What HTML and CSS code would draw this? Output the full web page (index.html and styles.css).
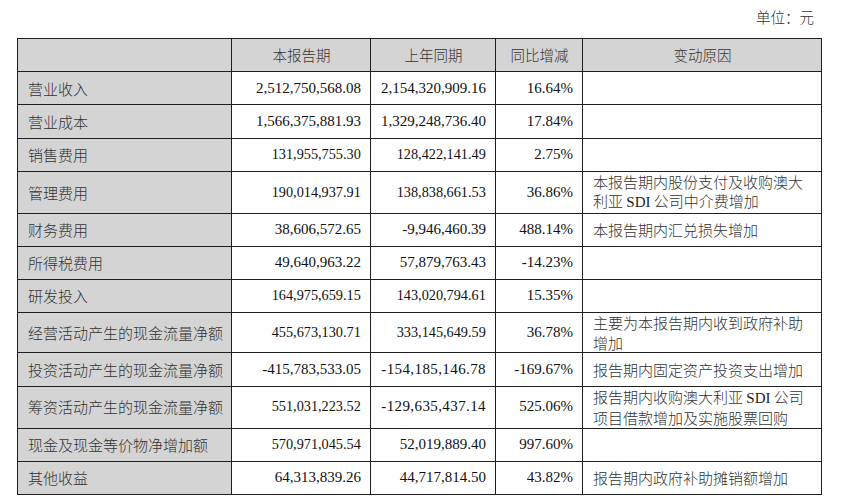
FILE: index.html
```html
<!DOCTYPE html>
<html lang="zh-CN">
<head>
<meta charset="utf-8">
<title>主要财务数据同比变动情况</title>
<link rel="stylesheet" href="styles.css">
</head>
<body>
<div class="page">
  <div class="unit">单位：元</div>
  <table class="fin">
    <colgroup>
      <col class="c1"><col class="c2"><col class="c3"><col class="c4"><col class="c5">
    </colgroup>
    <thead>
      <tr>
        <th class="lab"></th>
        <th>本报告期</th>
        <th>上年同期</th>
        <th>同比增减</th>
        <th>变动原因</th>
      </tr>
    </thead>
    <tbody>
      <tr><td class="lab">营业收入</td><td class="num">2,512,750,568.08</td><td class="num">2,154,320,909.16</td><td class="num">16.64%</td><td class="why"></td></tr>
      <tr><td class="lab">营业成本</td><td class="num">1,566,375,881.93</td><td class="num">1,329,248,736.40</td><td class="num">17.84%</td><td class="why"></td></tr>
      <tr><td class="lab">销售费用</td><td class="num"><span class="v sq">131,955,755.30</span></td><td class="num"><span class="v sq">128,422,141.49</span></td><td class="num">2.75%</td><td class="why"></td></tr>
      <tr class="two"><td class="lab">管理费用</td><td class="num"><span class="v sq">190,014,937.91</span></td><td class="num"><span class="v sq">138,838,661.53</span></td><td class="num">36.86%</td><td class="why">本报告期内股份支付及收购澳大利亚 <span class="lat">SDI</span> 公司中介费增加</td></tr>
      <tr><td class="lab">财务费用</td><td class="num">38,606,572.65</td><td class="num">-9,946,460.39</td><td class="num">488.14%</td><td class="why">本报告期内汇兑损失增加</td></tr>
      <tr><td class="lab">所得税费用</td><td class="num">49,640,963.22</td><td class="num">57,879,763.43</td><td class="num">-14.23%</td><td class="why"></td></tr>
      <tr><td class="lab">研发投入</td><td class="num"><span class="v sq">164,975,659.15</span></td><td class="num"><span class="v sq">143,020,794.61</span></td><td class="num">15.35%</td><td class="why"></td></tr>
      <tr class="two"><td class="lab">经营活动产生的现金流量净额</td><td class="num"><span class="v sq">455,673,130.71</span></td><td class="num"><span class="v sq">333,145,649.59</span></td><td class="num">36.78%</td><td class="why">主要为本报告期内收到政府补助增加</td></tr>
      <tr><td class="lab">投资活动产生的现金流量净额</td><td class="num">-415,783,533.05</td><td class="num wide">-154,185,146.78</td><td class="num">-169.67%</td><td class="why">报告期内固定资产投资支出增加</td></tr>
      <tr class="two"><td class="lab">筹资活动产生的现金流量净额</td><td class="num"><span class="v sq">551,031,223.52</span></td><td class="num wide">-129,635,437.14</td><td class="num">525.06%</td><td class="why">报告期内收购澳大利亚 <span class="lat">SDI</span> 公司项目借款增加及实施股票回购</td></tr>
      <tr><td class="lab">现金及现金等价物净增加额</td><td class="num"><span class="v sq">570,971,045.54</span></td><td class="num">52,019,889.40</td><td class="num">997.60%</td><td class="why"></td></tr>
      <tr><td class="lab">其他收益</td><td class="num">64,313,839.26</td><td class="num">44,717,814.50</td><td class="num">43.82%</td><td class="why">报告期内政府补助摊销额增加</td></tr>
    </tbody>
  </table>
</div>
</body>
</html>
```

FILE: styles.css
```css
html, body {
  margin: 0;
  padding: 0;
  background: #ffffff;
}

.page {
  padding: 7px 35px 0 17px;
  font-family: "Liberation Serif", "Noto Sans CJK SC", serif;
  color: #1a1a1a;
}

.unit {
  text-align: right;
  font-family: "Noto Sans CJK SC", sans-serif;
  font-size: 14.5px;
  line-height: 20px;
  color: #333;
  font-weight: 300;
  padding-right: 7px;
  height: 31px;
}

.fin {
  border-collapse: collapse;
  table-layout: fixed;
  width: 804px;
}

.c1 { width: 214px; }
.c2 { width: 139px; }
.c3 { width: 125px; }
.c4 { width: 87px; }
.c5 { width: 239px; }

.fin th,
.fin td {
  border: 1px solid #1e1e1e;
  padding: 0 9px 0 10px;
  line-height: 19.5px;
  height: 33.2px;
  box-sizing: border-box;
  vertical-align: middle;
}

.fin tr.two td {
  height: 39.7px;
  padding-top: 0;
  padding-bottom: 0;
}

.fin th {
  background: #d4d4d4;
  font-family: "Noto Sans CJK SC", sans-serif;
  font-weight: 300;
  font-size: 14.5px;
  color: #333;
  text-align: center;
  height: 33.2px;
}

.fin td.lab {
  background: #d4d4d4;
  font-family: "Noto Sans CJK SC", sans-serif;
  font-weight: 300;
  font-size: 15px;
  color: #333;
  text-align: left;
  white-space: nowrap;
}

.fin td.num {
  font-family: "Liberation Serif", serif;
  font-size: 15px;
  text-align: right;
  color: #111;
  white-space: nowrap;
}

.fin td.wide {
  letter-spacing: 0.4px;
  padding-right: 9px;
}

.v {
  display: inline-block;
  transform-origin: right center;
}

.sq { transform: scaleX(0.95); }

.fin td.why {
  font-family: "Noto Sans CJK SC", sans-serif;
  font-weight: 300;
  font-size: 15px;
  color: #333;
  text-align: left;
  padding-right: 10px;
}

.lat {
  font-family: "Liberation Serif", serif;
  font-weight: 400;
  color: #222;
}
```
